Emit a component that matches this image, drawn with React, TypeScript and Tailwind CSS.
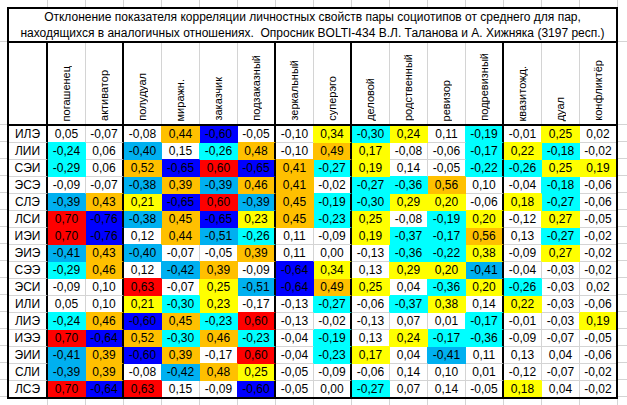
import React from 'react'

type C = 'w' | 'y' | 'o' | 'r' | 'b' | 'c' | 's'

const bgCls: Record<C, string> = {
  w: 'bg-white',
  y: 'bg-[#ffff00]',
  o: 'bg-[#ffc000]',
  r: 'bg-[#ff0000]',
  b: 'bg-[#0000ff]',
  c: 'bg-[#00ffff]',
  s: 'bg-[#00b0f0]',
}

const brCls: Record<C, string> = {
  w: 'border-r-[#d4d4d4]',
  y: 'border-r-[#ffff00]',
  o: 'border-r-[#ffc000]',
  r: 'border-r-[#ff0000]',
  b: 'border-r-[#0000ff]',
  c: 'border-r-[#00ffff]',
  s: 'border-r-[#00b0f0]',
}

const bbCls: Record<C, string> = {
  w: 'border-b-[#d4d4d4]',
  y: 'border-b-[#ffff00]',
  o: 'border-b-[#ffc000]',
  r: 'border-b-[#ff0000]',
  b: 'border-b-[#0000ff]',
  c: 'border-b-[#00ffff]',
  s: 'border-b-[#00b0f0]',
}

const headers = [
  'погашенец', 'активатор', 'полудуал', 'миражн.', 'заказчик', 'подзаказный', 'зеркальный', 'суперэго',
  'деловой', 'родственный', 'ревизор', 'подревизный', 'квазитожд.', 'дуал', 'конфликтёр',
]

// колонки, после которых идёт жирная линия
const thick = [1, 5, 7, 11]

const raw: [string, string][] = [
  ['ИЛЭ', '0,05w -0,07w -0,08w 0,44o -0,60b -0,05w -0,10w 0,34y -0,30c 0,24y 0,11w -0,19c -0,01w 0,25y 0,02w'],
  ['ЛИИ', '-0,24c 0,06w -0,40s 0,15w -0,26c 0,48o -0,10w 0,49o 0,17y -0,08w -0,06w -0,17c 0,22y -0,18c -0,02w'],
  ['СЭИ', '-0,29c 0,06w 0,52o -0,65b 0,60r -0,65b 0,41o -0,27c 0,19y 0,14w -0,05w -0,22c -0,26c 0,25y 0,19y'],
  ['ЭСЭ', '-0,09w -0,07w -0,38s 0,39o -0,39s 0,46o 0,41o -0,02w -0,27c -0,36c 0,56o 0,10w -0,04w -0,18c -0,06w'],
  ['СЛЭ', '-0,39s 0,43o 0,21y -0,65b 0,60r -0,39s 0,45o -0,19c -0,30c 0,29y 0,20y -0,06w 0,18y -0,27c -0,06w'],
  ['ЛСИ', '0,70r -0,76b -0,38s 0,45o -0,65b 0,23y 0,45o -0,23c 0,25y -0,08w -0,19c 0,20y -0,12w 0,27y -0,05w'],
  ['ИЭИ', '0,70r -0,76b 0,12w 0,44o -0,51s -0,26c 0,11w -0,09w 0,19y -0,37c -0,17c 0,56o 0,13w -0,27c -0,02w'],
  ['ЭИЭ', '-0,41s 0,43o -0,40s -0,07w -0,05w 0,39o 0,11w 0,00w -0,13w -0,36c -0,22c 0,38y -0,09w 0,27y -0,02w'],
  ['СЭЭ', '-0,29c 0,46o 0,12w -0,42s 0,39o -0,09w -0,64b 0,34y 0,13w 0,29y 0,20y -0,41s -0,04w -0,03w -0,02w'],
  ['ЭСИ', '-0,09w 0,10w 0,63r -0,07w 0,25y -0,51s -0,64b 0,49o 0,25y 0,04w -0,36c 0,20y -0,26c -0,03w 0,02w'],
  ['ИЛИ', '0,05w 0,10w 0,21y -0,30c 0,23y -0,17w -0,13w -0,27c -0,06w -0,37c 0,38y 0,14w 0,22y -0,03w -0,06w'],
  ['ЛИЭ', '-0,24c 0,46o -0,60b 0,45o -0,23c 0,60r -0,13w -0,02w -0,13w 0,07w 0,01w -0,17c -0,01w -0,03w 0,19y'],
  ['ИЭЭ', '0,70r -0,64b 0,52o -0,30c 0,46o -0,23c -0,04w -0,19c 0,13w 0,24y -0,17c -0,36c -0,09w -0,07w -0,05w'],
  ['ЭИИ', '-0,41s 0,39o -0,60b 0,39o -0,17w 0,60r -0,04w -0,23c 0,17y 0,04w -0,41s 0,11w 0,13w 0,04w -0,06w'],
  ['СЛИ', '-0,39s 0,39o -0,08w -0,42s 0,48o 0,25y -0,05w -0,09w -0,06w 0,14w 0,10w 0,01w -0,12w -0,07w -0,02w'],
  ['ЛСЭ', '0,70r -0,64b 0,63r 0,15w -0,09w -0,60b -0,05w 0,00w -0,27c 0,07w 0,14w -0,05w 0,18y 0,04w -0,02w'],
]

const rows = raw.map(([name, s]) => ({
  name,
  cells: s.split(' ').map((t) => ({ v: t.slice(0, -1), c: t.slice(-1) as C })),
}))

// цвет линии сетки между двумя ячейками: заливка перекрывает сетку
const lineColor = (a: C, b?: C): C => (a !== 'w' ? a : b && b !== 'w' ? b : 'w')

const GridStrip = () => (
  <div className="flex h-[7px]">
    <div className="w-[48px] shrink-0 border-r border-[#d4d4d4]" />
    {headers.map((h) => (
      <div key={h} className="w-[38px] shrink-0 border-r border-[#d4d4d4]" />
    ))}
    <div className="flex-1" />
  </div>
)

const SideStrip = ({ w }: { w: string }) => (
  <div className={`${w} flex flex-col`}>
    <div className="h-[35px] border-b border-[#d4d4d4]" />
    <div className="h-[83px] border-b border-[#d4d4d4]" />
    {rows.map((r) => (
      <div key={r.name} className="h-[17px] border-b border-[#d4d4d4]" />
    ))}
  </div>
)

const App = () => {
  return (
    <div className="w-[627px] h-[405px] overflow-hidden bg-white text-black font-['Liberation_Sans',Arial,sans-serif]">
      <GridStrip />
      <div className="flex">
        <SideStrip w="w-[7px] shrink-0" />
        <div className="w-[611px] shrink-0 border-2 border-black">
          <div className="h-[34px] border-b-2 border-black flex flex-col items-center justify-center text-[12px] leading-[16px] whitespace-pre">
            <div>Отклонение показателя корреляции личностных свойств пары социотипов от среднего для пар,</div>
            <div>находящихся в аналогичных отношениях.  Опросник BOLTI-434 В.Л. Таланова и А. Хижняка (3197 респ.)</div>
          </div>

          <div className="flex h-[83px] border-b-2 border-black">
            <div className="w-[39px] shrink-0 border-r-2 border-black" />
            {headers.map((h, i) => (
              <div
                key={h}
                className={`${i === 14 ? 'w-[36px]' : 'w-[38px]'} shrink-0 flex items-end justify-center pb-[3px] ${
                  thick.includes(i) ? 'border-r-2 border-black' : i === 14 ? '' : 'border-r border-[#d4d4d4]'
                }`}
              >
                <span className="[writing-mode:vertical-rl] rotate-180 whitespace-nowrap text-[11px] leading-none">{h}</span>
              </div>
            ))}
          </div>

          {rows.map((r, ri) => {
            const last = ri === rows.length - 1
            const next = rows[ri + 1]
            return (
              <div key={r.name} className={`flex ${last ? 'h-[16px]' : 'h-[17px]'}`}>
                <div
                  className={`w-[39px] shrink-0 flex items-center justify-center text-[12px] leading-none border-r-2 border-r-black ${
                    last ? '' : 'border-b border-b-[#d4d4d4]'
                  }`}
                >
                  {r.name}
                </div>
                {r.cells.map((cell, ci) => {
                  const right = r.cells[ci + 1]
                  const below = next?.cells[ci]
                  const rb =
                    ci === 14 ? '' : thick.includes(ci) ? 'border-r-2 border-r-black' : `border-r ${brCls[lineColor(cell.c, right?.c)]}`
                  const bb = last ? '' : `border-b ${bbCls[lineColor(cell.c, below?.c)]}`
                  return (
                    <div
                      key={ci}
                      className={`${ci === 14 ? 'w-[36px]' : 'w-[38px]'} shrink-0 flex items-center justify-center text-[12px] leading-none ${bgCls[cell.c]} ${rb} ${bb}`}
                    >
                      {cell.v}
                    </div>
                  )
                })}
              </div>
            )
          })}
        </div>
        <SideStrip w="flex-1" />
      </div>
      <GridStrip />
    </div>
  )
}

export default App
